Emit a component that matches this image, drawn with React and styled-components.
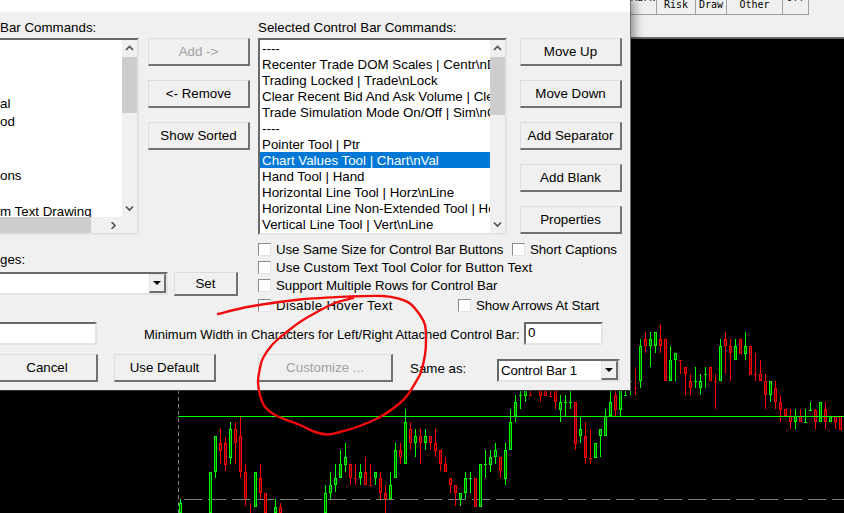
import styled, { createGlobalStyle } from 'styled-components'

const GlobalStyle = createGlobalStyle`
  html, body {
    margin: 0;
    background: #000;
    overflow: hidden;
  }
  * {
    box-sizing: border-box;
  }
`

const Desktop = styled.div`
  position: relative;
  display: flex;
  flex-direction: column;
  width: 844px;
  height: 513px;
  background: #000;
  overflow: hidden;
`

const Toolbar = styled.div`
  display: flex;
  flex: 0 0 39px;
  padding-left: 630px;
  background: #f0f0f0;
  border-bottom: 2px solid #696969;
`

const ToolButton = styled.div`
  display: flex;
  align-items: flex-end;
  justify-content: center;
  width: ${({ $w }) => $w}px;
  height: 15px;
  padding-bottom: ${({ $lift }) => ($lift ? 11 : 4)}px;
  border-right: 1px solid #a0a0a0;
  border-bottom: 1px solid #a0a0a0;
  overflow: hidden;
  font: 10px/11px 'DejaVu Sans Mono', monospace;
  color: #000;
`

const Chart = styled.svg`
  display: block;
  flex: 1;
  width: 844px;
`

const Dialog = styled.div`
  position: absolute;
  top: 0;
  left: 0;
  display: flex;
  flex-direction: column;
  width: 631px;
  height: 391px;
  background: #f0f0f0;
  border-right: 1px solid #707070;
  border-bottom: 1px solid #303030;
  box-shadow: 3px 0 10px rgba(0, 0, 0, 0.45);
  font: 13.33px/16px 'Liberation Sans', Arial, sans-serif;
  color: #000;
`

const TitleStrip = styled.div`
  flex: 0 0 12px;
  background: #fff;
`

const Upper = styled.div`
  display: grid;
  grid-template-columns: 148px 110px 262px 102px;
  height: 223px;
`

const Column = styled.div`
  display: flex;
  flex-direction: column;
`

const ButtonColumn = styled(Column)`
  gap: 14px;
  padding-top: 26px;
`

const ListLabel = styled.div`
  height: 26px;
  padding-top: 8px;
  white-space: nowrap;
`

const Sunken = styled.div`
  border: 2px solid;
  border-color: #696969 #e3e3e3 #e3e3e3 #696969;
  background: #fff;
`

const ListBox = styled(Sunken)`
  display: grid;
  grid-template-columns: 1fr 15px;
  width: ${({ $w }) => $w}px;
  height: 197px;
  background: #f0f0f0;
  border-left-width: ${({ $cut }) => ($cut ? 0 : 2)}px;
  overflow: hidden;
`

const Items = styled.div`
  background: #fff;
  overflow: hidden;
  white-space: nowrap;
`

const Item = styled.div`
  height: ${({ $h }) => $h}px;
  line-height: ${({ $h }) => $h + 2}px;
  padding-left: ${({ $pad }) => $pad}px;
  background: ${({ $selected }) => ($selected ? '#0078d7' : 'transparent')};
  color: ${({ $selected }) => ($selected ? '#fff' : '#000')};
`

const VScroll = styled.div`
  display: flex;
  flex-direction: column;
  justify-content: space-between;
  background: #f0f0f0;
`

const ScrollArrow = styled.div`
  display: flex;
  flex: 0 0 17px;
  align-items: center;
  justify-content: center;
`

const VThumb = styled.div`
  flex: 0 0 ${({ $h }) => $h}px;
  background: #cdcdcd;
`

const VSpace = styled.div`
  flex: 1;
`

const HScroll = styled.div`
  display: grid;
  grid-column: 1 / 3;
  grid-template-columns: 91px 14px 17px 15px;
  height: 16px;
`

const HThumb = styled.div`
  background: #cdcdcd;
`

const PushButton = styled.button`
  width: ${({ $w }) => $w || 102}px;
  height: ${({ $h }) => $h || 28}px;
  margin: 0 0 0 ${({ $gap }) => $gap || 0}px;
  padding: 0;
  flex: none;
  border: solid;
  border-width: 1px 2px 2px 1px;
  border-color: #dcdcdc #707070 #707070 #dcdcdc;
  background: #f0f0f0;
  font: inherit;
  color: ${({ disabled }) => (disabled ? '#a0a0a0' : '#000')};
`

const LowerTop = styled.div`
  display: grid;
  grid-template-columns: 258px 1fr;
  height: 79px;
`

const LeftPane = styled.div`
  padding-top: 17px;
`

const ComboRow = styled.div`
  display: flex;
  gap: 6px;
  margin-top: 4px;
`

const Combo = styled(Sunken)`
  display: flex;
  justify-content: flex-end;
  align-items: center;
  flex: none;
  width: ${({ $w }) => $w}px;
  height: 23px;
  margin-left: ${({ $cut }) => ($cut ? -3 : 0)}px;
  padding-left: 2px;
`

const ComboText = styled.span`
  flex: 1;
  padding-top: 1px;
  letter-spacing: -0.2px;
  white-space: nowrap;
`

const ComboButton = styled.div`
  display: flex;
  align-items: center;
  justify-content: center;
  flex: 0 0 17px;
  height: 19px;
  background: #f0f0f0;
  border: solid;
  border-width: 1px 2px 2px 1px;
  border-color: #e3e3e3 #707070 #707070 #e3e3e3;

  &::after {
    content: '';
    border: 4px solid transparent;
    border-top: 4px solid #000;
    border-bottom: 0;
  }
`

const Checks = styled.div`
  display: flex;
  flex-direction: column;
  padding-top: 5px;
`

const CheckRow = styled.div`
  display: flex;
  height: 18px;
  margin-top: ${({ $gap }) => $gap || 0}px;
`

const Check = styled.label`
  display: flex;
  align-items: center;
  gap: 5px;
  flex: none;
  width: ${({ $w }) => ($w ? `${$w}px` : 'auto')};
  padding-top: 2px;
  letter-spacing: ${({ $track }) => $track || 0}px;
  white-space: nowrap;
`

const CheckBox = styled.span`
  flex: 0 0 13px;
  height: 13px;
  margin-top: -2px;
  background: #fff;
  border: 1px solid;
  border-color: #8a8a8a #e3e3e3 #e3e3e3 #8a8a8a;
`

const MetricRow = styled.div`
  display: flex;
  align-items: center;
  margin-top: 8px;
  height: 23px;
`

const Edit = styled(Sunken)`
  flex: none;
  width: ${({ $w }) => $w}px;
  height: 23px;
  margin-left: ${({ $cut }) => ($cut ? -4 : 0)}px;
  padding-left: 2px;
  line-height: 17px;
`

const MetricLabel = styled.div`
  flex: none;
  width: 380px;
  margin-left: 47px;
  padding-top: 2px;
  font-size: 13px;
  white-space: nowrap;
`

const ActionRow = styled.div`
  display: flex;
  align-items: flex-end;
  margin-top: 9px;
`

const SameAs = styled.div`
  width: 87px;
  margin-left: 17px;
  padding-bottom: 5px;
`

const Overlay = styled.svg`
  position: absolute;
  top: 0;
  left: 0;
  pointer-events: none;
`

const Chevron = ({ dir }) => {
  const d = {
    up: 'M1 5 L4.5 1.5 L8 5',
    down: 'M1 1.5 L4.5 5 L8 1.5',
    right: 'M2.5 0 L6 3.5 L2.5 7',
  }[dir]
  return (
    <svg width='9' height='7' viewBox='0 0 9 7'>
      <path d={d} fill='none' stroke='#505050' strokeWidth='1.6' />
    </svg>
  )
}

const LEFT_ITEMS = ['', '', '', 'al', 'od', '', '', 'ons', '', 'm Text Drawing']

const SELECTED_ITEMS = [
  '----',
  'Recenter Trade DOM Scales | Centr\\nDOM',
  'Trading Locked | Trade\\nLock',
  'Clear Recent Bid And Ask Volume | Clear\\nVol',
  'Trade Simulation Mode On/Off | Sim\\nOn/Off',
  '----',
  'Pointer Tool | Ptr',
  'Chart Values Tool | Chart\\nVal',
  'Hand Tool | Hand',
  'Horizontal Line Tool | Horz\\nLine',
  'Horizontal Line Non-Extended Tool | Horz\\nNon',
  'Vertical Line Tool | Vert\\nLine',
]

// [x in crop, wick top, wick bottom, body top, body bottom, colour], read from 3x crops
const CANDLES_LEFT = [
  [31, 358, 399, 370, 399, 'g'], [121, 275, 399, 275, 399, 'g'], [136, 168, 293, 168, 275, 'g'],
  [151, 148, 252, 190, 212, 'r'], [166, 170, 272, 190, 255, 'r'], [181, 126, 252, 148, 233, 'g'],
  [196, 126, 252, 148, 190, 'r'], [211, 112, 293, 168, 275, 'r'], [226, 252, 378, 275, 358, 'r'],
  [241, 370, 399, 399, 399, 'r'], [256, 275, 380, 275, 380, 'g'], [271, 252, 358, 295, 338, 'r'],
  [286, 338, 399, 338, 399, 'r'], [316, 358, 399, 380, 399, 'g'], [331, 370, 399, 380, 399, 'r'],
  [466, 316, 399, 338, 399, 'g'], [481, 275, 358, 316, 338, 'g'], [496, 252, 335, 295, 316, 'g'],
  [511, 210, 295, 252, 295, 'g'], [526, 190, 275, 232, 254, 'g'], [541, 252, 315, 252, 295, 'r'],
  [556, 252, 315, 295, 295, 'r'], [571, 252, 316, 275, 295, 'g'], [586, 232, 316, 275, 316, 'r'],
  [601, 252, 316, 316, 316, 'r'], [616, 275, 316, 275, 295, 'g'], [631, 275, 358, 295, 338, 'r'],
  [646, 316, 399, 338, 358, 'r'], [661, 275, 358, 316, 358, 'g'], [676, 190, 295, 210, 295, 'g'],
  [691, 190, 252, 210, 232, 'r'], [706, 88, 252, 126, 252, 'g'], [721, 126, 210, 148, 190, 'r'],
  [736, 148, 232, 168, 190, 'g'], [751, 148, 252, 168, 190, 'r'], [766, 148, 210, 168, 190, 'g'],
  [781, 168, 210, 168, 190, 'r'], [796, 148, 232, 190, 212, 'r'], [811, 210, 272, 210, 252, 'r'],
  [826, 232, 275, 252, 275, 'r'], [841, 295, 338, 295, 316, 'r'], [856, 316, 378, 316, 338, 'r'],
  [871, 338, 378, 338, 358, 'g'], [886, 275, 358, 295, 338, 'g'], [901, 275, 338, 295, 295, 'g'],
  [916, 295, 380, 295, 380, 'r'], [931, 252, 380, 252, 380, 'g'], [946, 210, 295, 252, 252, 'g'],
  [961, 210, 275, 232, 254, 'g'], [976, 190, 252, 210, 232, 'g'],
]

const CANDLES_RIGHT = [
  [1, 432, 495, 432, 475, 'r'], [16, 390, 515, 412, 497, 'g'], [31, 288, 412, 328, 412, 'g'],
  [46, 245, 328, 268, 310, 'g'], [61, 232, 288, 247, 247, 'g'], [76, 232, 268, 232, 248, 'g'],
  [91, 232, 247, 247, 247, 'r'], [121, 232, 266, 232, 248, 'r'], [136, 232, 248, 232, 248, 'r'],
  [151, 232, 248, 248, 248, 'r'], [166, 232, 288, 232, 268, 'r'], [181, 245, 326, 268, 290, 'g'],
  [196, 247, 310, 268, 268, 'g'], [211, 232, 288, 268, 268, 'g'], [226, 268, 410, 268, 392, 'r'],
  [241, 310, 390, 348, 370, 'g'], [256, 328, 452, 370, 434, 'r'], [271, 348, 452, 434, 434, 'r'],
  [286, 390, 434, 390, 434, 'g'], [301, 348, 432, 348, 370, 'g'], [316, 288, 370, 310, 370, 'g'],
  [331, 232, 310, 268, 310, 'g'], [346, 225, 310, 247, 290, 'r'], [361, 225, 310, 232, 290, 'g'],
  [376, 225, 247, 247, 247, 'g'], [391, 165, 247, 205, 205, 'g'], [406, 162, 247, 226, 226, 'r'],
  [421, 78, 226, 100, 205, 'g'], [436, 57, 120, 78, 100, 'r'], [451, 57, 162, 78, 100, 'g'],
  [466, 57, 120, 57, 100, 'g'], [481, 37, 120, 78, 100, 'r'], [496, 78, 205, 78, 205, 'r'],
  [511, 100, 205, 142, 205, 'g'], [526, 120, 205, 120, 142, 'g'], [541, 142, 184, 142, 142, 'r'],
  [556, 162, 245, 162, 184, 'r'], [571, 184, 245, 205, 226, 'r'], [586, 162, 226, 205, 205, 'g'],
  [601, 184, 245, 205, 226, 'g'], [616, 162, 226, 184, 184, 'g'], [631, 162, 205, 162, 205, 'r'],
  [646, 184, 288, 205, 205, 'r'], [661, 78, 205, 100, 205, 'g'], [676, 57, 182, 78, 100, 'r'],
  [691, 78, 205, 100, 120, 'r'], [706, 78, 142, 100, 142, 'g'], [721, 78, 122, 78, 122, 'r'],
  [736, 57, 142, 100, 122, 'g'], [751, 100, 185, 100, 185, 'r'], [766, 120, 205, 184, 184, 'r'],
  [781, 142, 205, 184, 205, 'r'], [796, 184, 288, 205, 247, 'r'], [811, 205, 268, 205, 247, 'g'],
  [826, 205, 288, 226, 268, 'r'], [841, 247, 326, 268, 290, 'r'], [856, 288, 310, 288, 310, 'r'],
  [871, 288, 348, 310, 328, 'r'], [886, 288, 348, 310, 328, 'g'], [901, 288, 328, 310, 328, 'r'],
  [916, 288, 328, 328, 328, 'g'], [931, 268, 290, 290, 290, 'g'], [946, 288, 348, 290, 328, 'r'],
  [961, 268, 328, 268, 328, 'g'], [976, 268, 348, 288, 328, 'r'], [991, 310, 328, 310, 328, 'g'],
  [1006, 310, 348, 310, 328, 'r'], [1021, 310, 350, 310, 350, 'r'],
]

const toCandle = (originX, originY) => ([x, wt, wb, bt, bb, c]) => ({
  x: Math.floor(originX + x / 3),
  wickTop: Math.round(originY + wt / 3),
  wickBottom: Math.round(originY + wb / 3),
  bodyTop: Math.round(originY + bt / 3),
  bodyBottom: Math.round(originY + bb / 3),
  color: c === 'g' ? '#00ff00' : '#ff0000',
  core: c === 'g' ? '#006400' : '#700000',
})

const candles = [
  ...CANDLES_LEFT.map(toCandle(170, 380)),
  ...CANDLES_RIGHT.map(toCandle(500, 313)),
]

const Candle = ({ x, wickTop, wickBottom, bodyTop, bodyBottom, color, core }) => (
  <g stroke={color} shapeRendering='crispEdges'>
    <line x1={x + 0.5} x2={x + 0.5} y1={wickTop} y2={wickBottom} />
    {bodyBottom - bodyTop < 2 ? (
      <line x1={x - 1} x2={x + 2} y1={bodyTop + 0.5} y2={bodyTop + 0.5} />
    ) : (
      <rect
        x={x - 0.5}
        y={bodyTop + 0.5}
        width='2'
        height={bodyBottom - bodyTop - 1}
        fill={core}
      />
    )}
  </g>
)

const INK = [
  [218, 314], [250, 306.5], [300, 299.5], [350, 296.5], [383, 296], [400, 299], [410, 303.5],
  [420, 315], [425, 325], [426, 340], [425, 355], [421, 372], [417, 380], [409, 393], [400, 403],
  [380, 417], [357, 427], [340, 432], [328, 434.5], [315, 432], [300, 425], [277, 416], [265, 407],
  [260, 395], [258, 382], [260, 368], [263, 358], [272, 345], [283, 335], [300, 322], [317, 312],
  [335, 303], [353, 298],
]

// catmull-rom through the hand-drawn points
const smooth = (pts) => {
  let d = `M${pts[0][0]} ${pts[0][1]}`
  for (let i = 0; i < pts.length - 1; i++) {
    const p0 = pts[i - 1] || pts[i]
    const p1 = pts[i]
    const p2 = pts[i + 1]
    const p3 = pts[i + 2] || p2
    d += ` C${p1[0] + (p2[0] - p0[0]) / 6} ${p1[1] + (p2[1] - p0[1]) / 6},`
    d += ` ${p2[0] - (p3[0] - p1[0]) / 6} ${p2[1] - (p3[1] - p1[1]) / 6}, ${p2[0]} ${p2[1]}`
  }
  return d
}

function App() {
  return (
    <Desktop>
      <GlobalStyle />
      <Toolbar>
        <ToolButton $w={27} $lift>Mark</ToolButton>
        <ToolButton $w={39}>Risk</ToolButton>
        <ToolButton $w={31}>Draw</ToolButton>
        <ToolButton $w={56}>Other</ToolButton>
        <ToolButton $w={26} $lift>Off</ToolButton>
      </Toolbar>

      <Chart viewBox='0 39 844 474'>
        <line x1='178.5' x2='178.5' y1='390' y2='513' stroke='#808080' strokeDasharray='4 3' shapeRendering='crispEdges' />
        <line x1='184' x2='844' y1='499.5' y2='499.5' stroke='#808080' strokeDasharray='18 6' shapeRendering='crispEdges' />
        {candles.map((c, i) => (
          <Candle key={i} {...c} />
        ))}
        <line x1='178' x2='844' y1='416.5' y2='416.5' stroke='#00ff00' shapeRendering='crispEdges' />
      </Chart>

      <Dialog>
        <TitleStrip />
        <Upper>
          <Column>
            <ListLabel>Bar Commands:</ListLabel>
            <ListBox $w={139} $cut>
              <Items>
                {LEFT_ITEMS.map((t, i) => (
                  <Item key={i} $h={18} $pad={0}>{t}</Item>
                ))}
              </Items>
              <VScroll>
                <ScrollArrow><Chevron dir='up' /></ScrollArrow>
                <VThumb $h={56} />
                <VSpace />
                <ScrollArrow><Chevron dir='down' /></ScrollArrow>
              </VScroll>
              <HScroll>
                <HThumb />
                <span />
                <ScrollArrow><Chevron dir='right' /></ScrollArrow>
              </HScroll>
            </ListBox>
          </Column>

          <ButtonColumn>
            <PushButton disabled>Add -&gt;</PushButton>
            <PushButton>&lt;- Remove</PushButton>
            <PushButton>Show Sorted</PushButton>
          </ButtonColumn>

          <Column>
            <ListLabel>Selected Control Bar Commands:</ListLabel>
            <ListBox $w={249}>
              <Items>
                {SELECTED_ITEMS.map((t, i) => (
                  <Item key={i} $h={16} $pad={2} $selected={t.startsWith('Chart Values')}>
                    {t}
                  </Item>
                ))}
              </Items>
              <VScroll>
                <ScrollArrow><Chevron dir='up' /></ScrollArrow>
                <VThumb $h={58} />
                <VSpace />
                <ScrollArrow><Chevron dir='down' /></ScrollArrow>
              </VScroll>
            </ListBox>
          </Column>

          <ButtonColumn>
            <PushButton>Move Up</PushButton>
            <PushButton>Move Down</PushButton>
            <PushButton>Add Separator</PushButton>
            <PushButton>Add Blank</PushButton>
            <PushButton>Properties</PushButton>
          </ButtonColumn>
        </Upper>

        <LowerTop>
          <LeftPane>
            <div>ges:</div>
            <ComboRow>
              <Combo $w={171} $cut>
                <ComboButton />
              </Combo>
              <PushButton $w={64} $h={24}>Set</PushButton>
            </ComboRow>
          </LeftPane>
          <Checks>
            <CheckRow>
              <Check $w={254} $track={-0.1}><CheckBox />Use Same Size for Control Bar Buttons</Check>
              <Check $track={-0.1}><CheckBox />Short Captions</Check>
            </CheckRow>
            <CheckRow>
              <Check $track={0.05}><CheckBox />Use Custom Text Tool Color for Button Text</Check>
            </CheckRow>
            <CheckRow>
              <Check $track={-0.06}><CheckBox />Support Multiple Rows for Control Bar</Check>
            </CheckRow>
            <CheckRow $gap={2}>
              <Check $w={200} $track={0.28}><CheckBox />Disable Hover Text</Check>
              <Check $track={-0.1}><CheckBox />Show Arrows At Start</Check>
            </CheckRow>
          </Checks>
        </LowerTop>

        <MetricRow>
          <Edit $w={101} $cut />
          <MetricLabel>Minimum Width in Characters for Left/Right Attached Control Bar:</MetricLabel>
          <Edit $w={79}>0</Edit>
        </MetricRow>

        <ActionRow>
          <PushButton $w={101} $gap={-3}>Cancel</PushButton>
          <PushButton $gap={16}>Use Default</PushButton>
          <PushButton $w={135} $gap={42} disabled>Customize ...</PushButton>
          <SameAs>Same as:</SameAs>
          <Combo $w={123}>
            <ComboText>Control Bar 1</ComboText>
            <ComboButton />
          </Combo>
        </ActionRow>
      </Dialog>

      <Overlay width='844' height='513' viewBox='0 0 844 513'>
        <path d={smooth(INK)} fill='none' stroke='#f40a0a' strokeWidth='2.4' strokeLinecap='round' />
      </Overlay>
    </Desktop>
  )
}

export default App
